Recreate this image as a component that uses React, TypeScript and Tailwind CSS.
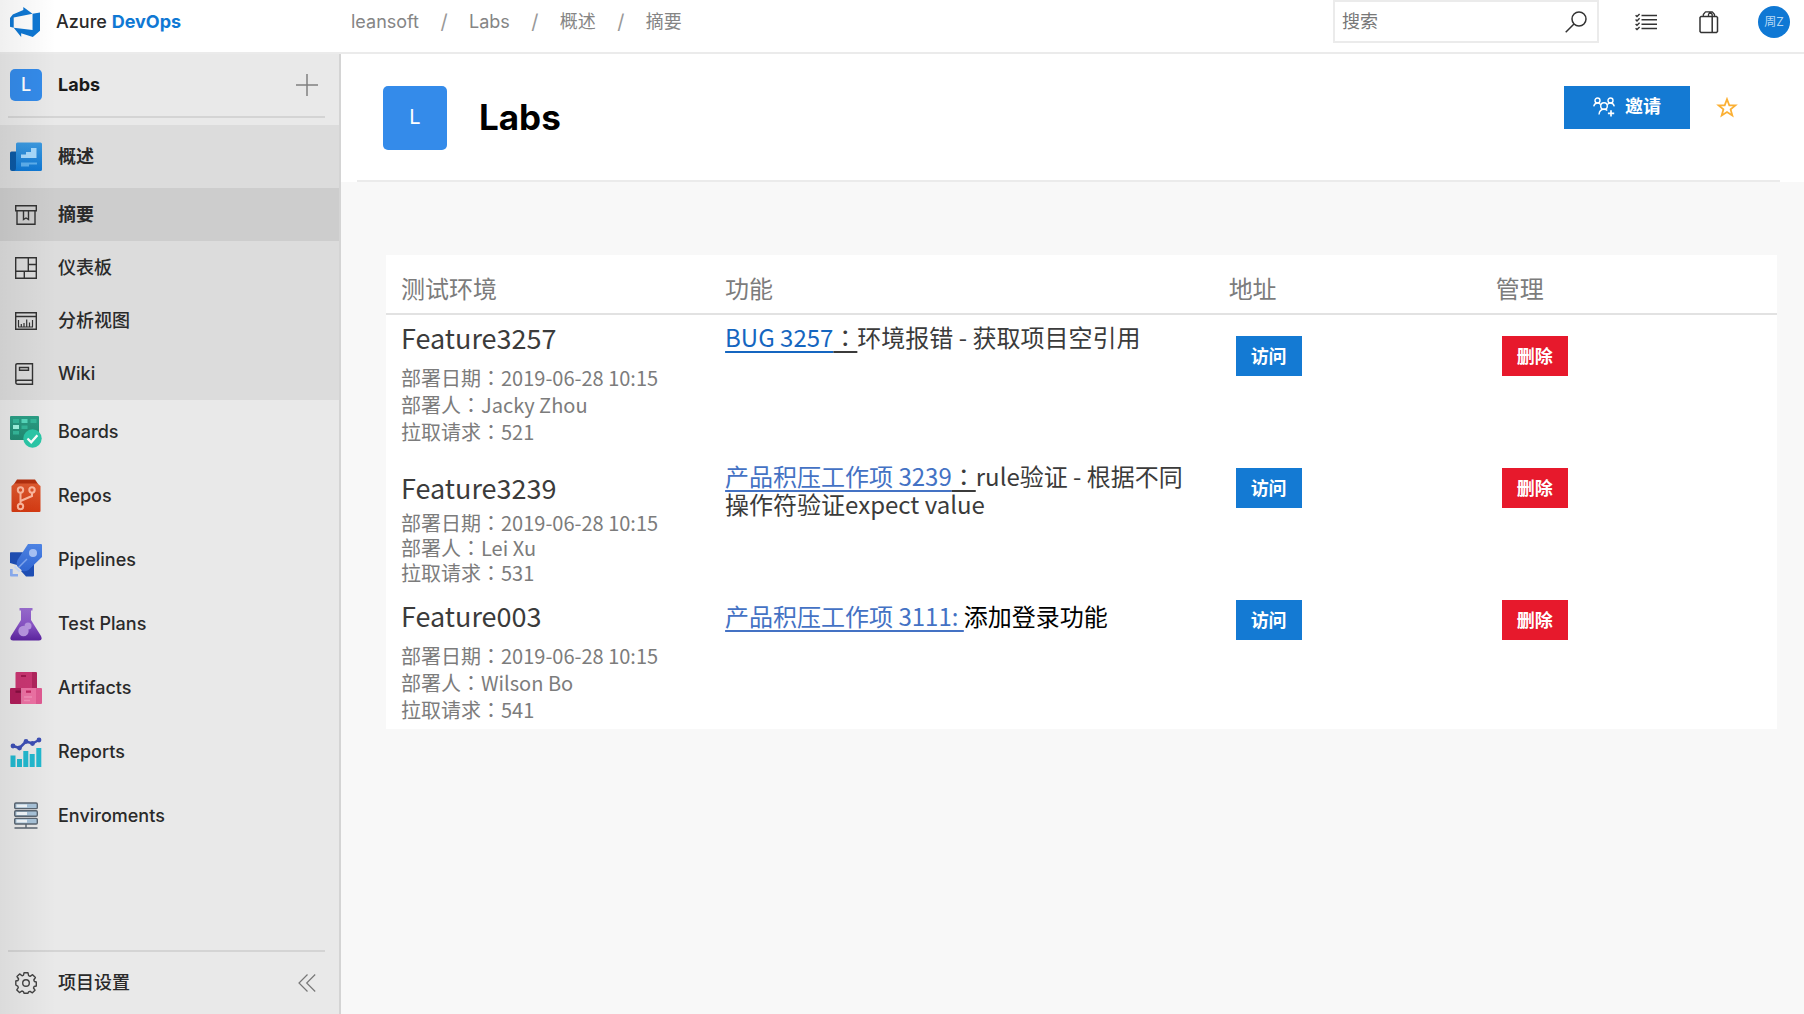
import React from "react";

const uiFont = "font-['Inter','Noto_Sans_CJK_SC',sans-serif]";
const tableFont = "font-['Noto_Sans_CJK_SC',sans-serif]";

/* ---------- icons ---------- */

const DevOpsLogo = () => (
  <svg viewBox="0 0 24 24" className="size-[30px] shrink-0" fill="#0f78d4" aria-hidden="true">
    <path d="M0 8.877L2.247 5.91l8.405-3.416V.022l7.37 5.393L2.966 8.338v8.225L0 15.707zm24-4.45v14.651l-5.753 4.9-9.303-3.057v3.056l-5.978-7.416 15.057 1.798V5.415z" />
  </svg>
);

const SearchIcon = () => (
  <svg viewBox="0 0 22 22" className="size-[22px]" fill="none" stroke="#333" strokeWidth="1.5" aria-hidden="true">
    <circle cx="14" cy="8" r="7" />
    <path d="M9 13L.7 21.3" />
  </svg>
);

const TaskListIcon = () => (
  <svg viewBox="0 0 22 18" className="h-[18px] w-[22px]" fill="none" stroke="#333" aria-hidden="true">
    <path d="M6.5 2.5H22M6.5 6.8H22M6.5 11.2H22M6.5 15.5H22" strokeWidth="1.6" />
    <path d="M.6 2.2l1.4 1.4L4.6 1M.6 6.5L2 7.9l2.6-2.6M.6 10.9L2 12.3l2.6-2.6M.6 15.2L2 16.6 4.6 14" strokeWidth="1.4" />
  </svg>
);

const BagIcon = () => (
  <svg viewBox="0 0 20 24" className="h-6 w-5" fill="none" stroke="#333" strokeWidth="1.5" strokeLinejoin="round" aria-hidden="true">
    <path d="M1 7.5L2 6.5h15.500l1 1v14l-1 1H2l-1-1zM13.200 6.500v16" />
    <path d="M4.300 6.500V4.500l2.200-2.700h6.800l2.200 2.700v2M9.500 6.500V4.300l1.700-2.300M11.200 2l2 2.500v2" strokeWidth="1.3" />
  </svg>
);

const PlusIcon = () => (
  <svg viewBox="0 0 22 22" className="size-[22px]" stroke="#808080" strokeWidth="1.5" aria-hidden="true">
    <path d="M11 0v22M0 11h22" />
  </svg>
);

const CollapseIcon = () => (
  <svg viewBox="0 0 18 18" className="size-[18px]" fill="none" stroke="#777" strokeWidth="1.2" aria-hidden="true">
    <path d="M9.5.5L1 9l8.5 8.5M17.2.5L8.7 9l8.5 8.5" />
  </svg>
);

const StarIcon = () => (
  <svg viewBox="0 0 22 21" className="h-[21px] w-[22px]" fill="none" stroke="#fbb034" strokeWidth="1.8" aria-hidden="true">
    <path d="M11 2.2l2.3 6.1 6.1.1-4.8 4 1.7 6.1L11 15l-5.3 3.5 1.7-6.1-4.8-4 6.1-.1z" />
  </svg>
);

const InviteIcon = () => (
  <svg viewBox="0 0 22 20" className="h-5 w-[22px]" fill="none" stroke="#fff" strokeWidth="1.4" aria-hidden="true">
    <circle cx="4.5" cy="3.5" r="2.5" />
    <circle cx="17.5" cy="3.5" r="2.5" />
    <circle cx="11" cy="9" r="3.3" />
    <path d="M.7 9.3C1.2 7.2 2.7 6 4.5 6c1.5 0 2.5.7 3.2 1.7M21.3 9.3C20.8 7.2 19.3 6 17.5 6c-1.5 0-2.5.7-3.2 1.7M6 17.5c.3-3 2.3-5.2 5-5.2 1.4 0 2.5.4 3.3 1.2" />
    <path d="M18 13.2v6.3M14.9 16.3h6.3" strokeWidth="1.7" />
  </svg>
);

const OverviewIcon = () => (
  <svg viewBox="0 0 32 30" className="h-[30px] w-8 shrink-0" aria-hidden="true">
    <defs>
      <linearGradient id="ov" x1="0" y1="0" x2="0" y2="1">
        <stop offset="0" stopColor="#3d9ae0" />
        <stop offset="1" stopColor="#0f78d4" />
      </linearGradient>
    </defs>
    <path d="M0 11q0-1.5 1.5-1.5H8V29H2q-2 0-2-2z" fill="#0c59a4" />
    <path d="M6 2q0-1.5 1.5-1.5h23q1.5 0 1.5 1.5v25.5q0 1.5-1.5 1.5H3.500Q6 29 6 26z" fill="url(#ov)" />
    <path d="M11 16v-3.500h5V10h5V6h5.500v10z" fill="#a9dafc" />
    <path d="M11 20.500h16v2H19v2h-8z" fill="#5eb0ee" />
  </svg>
);

const SummaryIcon = () => (
  <svg viewBox="0 0 22 20" className="h-5 w-[22px]" fill="none" stroke="#333" strokeWidth="1.4" aria-hidden="true">
    <path d="M.7.7h20.600v5H.7zM2 5.700v13.600h18V5.700M8.500 6v8.500L11 13l2.500 1.500V6" />
  </svg>
);

const DashboardIcon = () => (
  <svg viewBox="0 0 22 22" className="size-[22px]" fill="none" stroke="#333" strokeWidth="1.4" aria-hidden="true">
    <path d="M.7.7h20.600v20.600H.7zM.7 14.300h20.600M13.300.7v13.600M13.300 7.500h8M9.300 14.300v7" />
  </svg>
);

const AnalyticsIcon = () => (
  <svg viewBox="0 0 22 18" className="h-[18px] w-[22px]" fill="none" stroke="#333" strokeWidth="1.4" aria-hidden="true">
    <path d="M.7.7h20.600v16.600H.7zM.7 4.500h20.600" />
    <path d="M3.500 8v6.500M6.300 12v2.500M9 11v3.500M11.700 7.500v7M14.500 10.500v4M17.500 8v6.500M3 15h15" strokeWidth="1.2" />
  </svg>
);

const WikiIcon = () => (
  <svg viewBox="0 0 22 22" className="size-[22px]" fill="none" stroke="#333" strokeWidth="1.4" aria-hidden="true">
    <path d="M.8 19V2.200Q.8.700 2.300.700H17.500v20.600H2.800Q.8 21.300.8 19.300 .8 17.300 2.800 17.300H17.500M4.500 4.500h9v2.700h-9z" />
  </svg>
);

const BoardsIcon = () => (
  <svg viewBox="0 0 32 32" className="size-8 shrink-0" aria-hidden="true">
    <defs>
      <linearGradient id="bd" x1="0" y1="0" x2="0" y2="1">
        <stop offset="0" stopColor="#2c9f86" />
        <stop offset="1" stopColor="#218c73" />
      </linearGradient>
    </defs>
    <rect x="0" y="0" width="29" height="24" rx="1" fill="url(#bd)" />
    <path d="M3 3h6v4H3zM20.500 3h6v4h-6zM11.500 9.500h6v3.500h-6zM3 15h6v3.500H3z" fill="#35b99b" />
    <path d="M11.500 3h6v4h-6z" fill="#57d9bd" />
    <path d="M3 9h6v4H3z" fill="#a0f5e0" />
    <circle cx="22.5" cy="22.5" r="9.2" fill="#2bc8a8" />
    <path d="M17.500 22.500l3.700 3.700 6.200-7" fill="none" stroke="#fff" strokeWidth="2.3" />
  </svg>
);

const ReposIcon = () => (
  <svg viewBox="0 0 32 34" className="h-[34px] w-8 shrink-0" aria-hidden="true">
    <defs>
      <linearGradient id="rp" x1="0" y1="0" x2="0" y2="1">
        <stop offset="0" stopColor="#e05a30" />
        <stop offset="1" stopColor="#d63a12" />
      </linearGradient>
    </defs>
    <path d="M7 .5h18l4 6H3z" fill="#b5300f" />
    <path d="M1.500 7L5 4.500h22L30.500 7v25q0 1-1 1h-27q-1 0-1-1z" fill="url(#rp)" />
    <g fill="none" stroke="#ffb9a0" strokeWidth="2">
      <path d="M10.500 14v10.500M22 14v3l-11.500 5" />
      <circle cx="10.5" cy="11" r="2.7" />
      <circle cx="22" cy="11" r="2.7" />
      <circle cx="10.5" cy="27.5" r="2.7" />
    </g>
  </svg>
);

const PipelinesIcon = () => (
  <svg viewBox="0 0 32 33" className="h-[33px] w-8 shrink-0" aria-hidden="true">
    <defs>
      <linearGradient id="pl" x1="0" y1="0" x2="0" y2="1">
        <stop offset="0" stopColor="#4f86e8" />
        <stop offset="1" stopColor="#3269d8" />
      </linearGradient>
    </defs>
    <path d="M0 9q0-.8.800-.8H13L7 21 0 19zM24 18v13.500q0 1-1 1H16L11 27z" fill="#1f50b8" />
    <path d="M18 0h13q1 0 1 1v12L18.500 26q-3 2-6 1l-5.500-5q-1-3 .5-6z" fill="url(#pl)" />
    <circle cx="23" cy="9" r="4" fill="#a9c4f8" />
    <path d="M8.500 23.500L17 15" stroke="#82a9f3" strokeWidth="1.5" />
    <path d="M0 25h2.700v5H8v2.500H1q-1 0-1-1z" fill="#8db0f5" />
    <path d="M4.500 22.500L9.500 27.500" stroke="#cfdffb" strokeWidth="2" />
  </svg>
);

const TestPlansIcon = () => (
  <svg viewBox="0 0 32 33" className="h-[33px] w-8 shrink-0" aria-hidden="true">
    <defs>
      <linearGradient id="tp" x1="0" y1="0" x2="0" y2="1">
        <stop offset="0" stopColor="#9a6dd0" />
        <stop offset=".5" stopColor="#8a55c8" />
        <stop offset="1" stopColor="#5c24a0" />
      </linearGradient>
    </defs>
    <path d="M9.500 0h13v2.500H21v9.500L31 28q2 4.500-2 4.500H3q-4 0-2-4.500L11 12V2.500H9.500z" fill="url(#tp)" />
    <circle cx="18" cy="18" r="3.5" fill="#b996e2" />
    <circle cx="13.5" cy="23" r="5.2" fill="#b996e2" />
  </svg>
);

const ArtifactsIcon = () => (
  <svg viewBox="0 0 32 32" className="size-8 shrink-0" aria-hidden="true">
    <path d="M5.500 1q0-1 1-1H22v16H5.500z" fill="#ca3672" />
    <path d="M22 0h4q1 0 1 1v15h-5z" fill="#b0265d" />
    <path d="M11 3h5v2h-5z" fill="#a0194f" />
    <path d="M0 17q0-1 1-1h10.500v16H1q-1 0-1-1z" fill="#b01d5a" />
    <path d="M11.500 16H26v16H11.500z" fill="#ed72a4" />
    <path d="M26 16h5q1 0 1 1v14q0 1-1 1h-5z" fill="#e05a92" />
    <path d="M5.500 18.500H11v2.300H5.500z" fill="#850f3f" />
    <path d="M16 18.500h5v2.300h-5z" fill="#c22865" />
    <path d="M14 25h8M14 28.500h6" stroke="#f48fb8" strokeWidth="1.5" />
  </svg>
);

const ReportsIcon = () => (
  <svg viewBox="0 0 32 30" className="h-[30px] w-8 shrink-0" aria-hidden="true">
    <path d="M.5 18.500h5V30h-5zM7 22h5v8H7zM13.300 14h5v16h-5zM19.700 17h5v13h-5zM26.300 11h5v19h-5z" fill="#22b9cf" />
    <path d="M3 9l6.500 2L16 4.500 22.500 6.500 29 3" fill="none" stroke="#3d4fb5" strokeWidth="2.5" />
    <g fill="#3d4fb5">
      <circle cx="3" cy="9" r="2.4" />
      <circle cx="9.5" cy="11" r="2.4" />
      <circle cx="16" cy="4.5" r="2.4" />
      <circle cx="22.5" cy="6.5" r="2.4" />
      <circle cx="29" cy="3" r="2.4" />
    </g>
  </svg>
);

const ServersIcon = () => (
  <svg viewBox="0 0 24 28" className="h-7 w-6" fill="#a9c4da" stroke="#5b6672" strokeWidth="1.4" aria-hidden="true">
    <rect x=".7" y="1" width="22.6" height="5.6" rx="1.2" />
    <rect x=".7" y="8.7" width="22.6" height="5.6" rx="1.2" />
    <rect x=".7" y="16.4" width="22.6" height="5.6" rx="1.2" />
    <path d="M2.500 3.800H13M2.500 11.500H13M2.500 19.200H13" stroke="#f2f7fb" strokeWidth="2.8" />
    <path d="M12 22v4M.5 26h23" />
  </svg>
);

const GearIcon = () => (
  <svg viewBox="0 0 22 22" className="size-[22px]" fill="none" stroke="#444" strokeWidth="1.4" strokeLinejoin="round" aria-hidden="true">
    <path d="M9 .800h4l.6 2.900 1.500.600 2.500-1.600 2.800 2.800-1.600 2.500.6 1.500 1.900.5v4l-2.200.5-.6 1.500 1.500 2.200-2.600 2.600-2.400-1.500-1.500.600-.5 1.400H9l-.6-1.700-1.500-.600-2.400 1.600-2.700-2.700 1.500-2.300-.6-1.500L.8 13V9l2.200-.500.600-1.500-1.600-2.500 2.600-2.600L7.100 3.800l1.400-.600z" />
    <circle cx="11" cy="11" r="3.3" />
  </svg>
);

/* ---------- sidebar ---------- */

const overviewItems = [
  { label: "摘要", icon: <SummaryIcon />, active: true },
  { label: "仪表板", icon: <DashboardIcon />, active: false },
  { label: "分析视图", icon: <AnalyticsIcon />, active: false },
  { label: "Wiki", icon: <WikiIcon />, active: false },
];

const hubs = [
  { label: "Boards", icon: <BoardsIcon /> },
  { label: "Repos", icon: <ReposIcon /> },
  { label: "Pipelines", icon: <PipelinesIcon /> },
  { label: "Test Plans", icon: <TestPlansIcon /> },
  { label: "Artifacts", icon: <ArtifactsIcon /> },
  { label: "Reports", icon: <ReportsIcon /> },
  { label: "Enviroments", icon: <ServersIcon /> },
];

const IconSlot = ({ children }: { children: React.ReactNode }) => (
  <span className="flex w-8 shrink-0 justify-center">{children}</span>
);

const Sidebar = () => (
  <aside className="flex w-[341px] shrink-0 flex-col border-r-2 border-[#d4d4d4] bg-[#e9e9e9] text-lg font-medium text-[#2a2a2a]">
    <div className="ml-2 mr-[14px] flex h-16 items-center border-b-2 border-[#d4d4d4] pl-[2px]">
      <span className="flex size-8 items-center justify-center rounded-[5px] bg-[#348bea] text-white">L</span>
      <span className="ml-4 font-bold text-[#1a1a1a]">Labs</span>
      <button type="button" aria-label="新建" className="ml-auto mr-[7px]">
        <PlusIcon />
      </button>
    </div>
    <nav className="flex flex-col">
      <div className="mt-[7px] bg-[#dcdcdc]">
        <a href="#overview" className="flex h-[63px] items-center gap-4 pl-[10px] font-bold">
          <OverviewIcon />
          概述
        </a>
        {overviewItems.map((item) => (
          <a
            key={item.label}
            href="#hub"
            className={
              item.active
                ? "flex h-[53px] items-center gap-4 bg-[#cdcdcd] pl-[10px] font-bold"
                : "flex h-[53px] items-center gap-4 pl-[10px]"
            }
          >
            <IconSlot>{item.icon}</IconSlot>
            {item.label}
          </a>
        ))}
      </div>
      {hubs.map((hub) => (
        <a key={hub.label} href="#hub" className="flex h-16 items-center gap-4 pl-[10px]">
          <IconSlot>{hub.icon}</IconSlot>
          {hub.label}
        </a>
      ))}
    </nav>
    <div className="ml-2 mr-[14px] mt-auto flex h-16 items-center border-t-2 border-[#d4d4d4] pl-[2px]">
      <a href="#settings" className="flex items-center gap-4">
        <IconSlot>
          <GearIcon />
        </IconSlot>
        项目设置
      </a>
      <button type="button" aria-label="折叠" className="ml-auto mr-[9px]">
        <CollapseIcon />
      </button>
    </div>
  </aside>
);

/* ---------- top bar ---------- */

const crumbs = ["leansoft", "Labs", "概述", "摘要"];

const TopBar = () => (
  <header className="flex h-[54px] shrink-0 items-start border-b-2 border-[#ebebeb] bg-white">
    <a href="#home" className="flex h-[43px] w-[351px] shrink-0 items-center gap-4 pl-[10px] text-lg font-medium text-[#2a2a2a]">
      <DevOpsLogo />
      <span>
        Azure <span className="font-bold text-[#0f78d4]">DevOps</span>
      </span>
    </a>
    <nav aria-label="breadcrumb" className="flex h-[43px] items-center text-lg text-[#858585]">
      {crumbs.map((c, i) => (
        <React.Fragment key={c}>
          {i > 0 && <span className="w-[50px] text-center text-xl text-[#999]">/</span>}
          <a href="#crumb">{c}</a>
        </React.Fragment>
      ))}
    </nav>
    <div className="ml-auto flex h-[43px] items-center pr-[14px]">
      <label className="flex h-[43px] w-[266px] items-center border-2 border-[#ebebeb] pl-[7px] pr-[10px]">
        <input
          type="text"
          aria-label="搜索"
          placeholder="搜索"
          className="min-w-0 flex-1 bg-transparent text-lg outline-none placeholder:text-[#777]"
        />
        <SearchIcon />
      </label>
      <button type="button" aria-label="工作项" className="ml-9">
        <TaskListIcon />
      </button>
      <button type="button" aria-label="市场" className="ml-[42px]">
        <BagIcon />
      </button>
      <button
        type="button"
        className="ml-[39px] flex size-8 items-center justify-center rounded-full bg-[#0f78d4] text-xs text-[#b5d8f5]"
      >
        周Z
      </button>
    </div>
  </header>
);

/* ---------- environments table ---------- */

const Colon = () => <span className="font-['Noto_Sans_CJK_TC',sans-serif]">：</span>;

const rows = [
  {
    name: "Feature3257",
    date: "2019-06-28 10:15",
    by: "Jacky Zhou",
    pr: "521",
    link: "BUG 3257",
    linkClass: "text-[#1566c0]",
    colon: true,
    text: "环境报错 - 获取项目空引用",
    textClass: "text-[#3b3b3b]",
    height: "h-[133px]",
    envPad: "pt-[7px]",
    metaClass: "mt-[10px] leading-[27px]",
    featPad: "pt-2",
    actionPad: "pt-[21px]",
  },
  {
    name: "Feature3239",
    date: "2019-06-28 10:15",
    by: "Lei Xu",
    pr: "531",
    link: "产品积压工作项 3239",
    linkClass: "text-[#4472c4]",
    colon: true,
    text: "rule验证 - 根据不同操作符验证expect value",
    textClass: "text-[#3b3b3b]",
    height: "h-[138px]",
    envPad: "pt-[25px]",
    metaClass: "mt-[6px] leading-[25px]",
    featPad: "pt-[15px]",
    actionPad: "pt-[21px]",
  },
  {
    name: "Feature003",
    date: "2019-06-28 10:15",
    by: "Wilson Bo",
    pr: "541",
    link: "产品积压工作项 3111: ",
    linkClass: "text-[#4472c4]",
    colon: false,
    text: "添加登录功能",
    textClass: "text-black",
    height: "h-[144px]",
    envPad: "pt-[15px]",
    metaClass: "mt-[10px] leading-[27px]",
    featPad: "pt-[17px]",
    actionPad: "pt-[15px]",
  },
];

const EnvironmentTable = () => (
  <table className={`w-full table-fixed border-collapse bg-white text-left ${tableFont}`}>
    <colgroup>
      <col className="w-[23.3%]" />
      <col className="w-[36.2%]" />
      <col className="w-[19.2%]" />
      <col />
    </colgroup>
    <thead>
      <tr className="h-[59px] border-b-2 border-[#e2e2e2] text-2xl text-[#7c7c7c]">
        {["测试环境", "功能", "地址", "管理"].map((h) => (
          <th key={h} scope="col" className="pl-[15px] pt-[7px] font-normal">
            {h}
          </th>
        ))}
      </tr>
    </thead>
    <tbody>
      {rows.map((r) => (
        <tr key={r.name} className={`align-top ${r.height}`}>
          <td className="p-0 pl-[15px]">
            <div className={r.envPad}>
              <div className="text-[27px] leading-8 text-[#3b3b3b]">{r.name}</div>
              <div className={`text-xl text-[#7c7c7c] ${r.metaClass}`}>
                <p>
                  部署日期
                  <Colon />
                  {r.date}
                </p>
                <p>
                  部署人
                  <Colon />
                  {r.by}
                </p>
                <p>
                  拉取请求
                  <Colon />
                  {r.pr}
                </p>
              </div>
            </div>
          </td>
          <td className="p-0 pl-[15px] pr-6">
            <p className={`text-2xl leading-7 ${r.featPad} ${r.textClass}`}>
              <a href="#item" className={`whitespace-pre underline decoration-2 underline-offset-4 ${r.linkClass}`}>
                {r.link}
              </a>
              {r.colon && (
                <span className="underline decoration-2 underline-offset-4">
                  <Colon />
                </span>
              )}
              {r.text}
            </p>
          </td>
          <td className={`pl-[22px] ${r.actionPad}`}>
            <button type="button" className="flex h-10 w-[66px] items-center justify-center bg-[#147ad3] pb-[2px] text-lg font-bold text-white">
              访问
            </button>
          </td>
          <td className={`pl-[21px] ${r.actionPad}`}>
            <button type="button" className="flex h-10 w-[66px] items-center justify-center bg-[#e7192c] pb-[2px] text-lg font-bold text-white">
              删除
            </button>
          </td>
        </tr>
      ))}
    </tbody>
  </table>
);

/* ---------- page ---------- */

export default function App() {
  return (
    <div className={`relative flex min-h-screen flex-col bg-[#f8f8f8] ${uiFont}`}>
      <TopBar />
      <div className="flex flex-1">
        <Sidebar />
        <main className="min-w-0 flex-1">
          <section className="bg-white pl-4 pr-6">
            <div className="flex h-[128px] items-start border-b-2 border-[#ebebeb] pl-[26px] pr-[42px] pt-8">
              <span className="flex size-16 items-center justify-center rounded-[5px] bg-[#348bea] pb-[2px] text-xl text-white">L</span>
              <h1 className="ml-8 text-[35px] leading-[62px] font-bold text-black">Labs</h1>
              <button type="button" className="ml-auto flex h-[43px] w-[126px] items-center justify-center gap-[10px] bg-[#147ad3] pb-[2px] text-lg font-bold text-white">
                <InviteIcon />
                邀请
              </button>
              <button type="button" aria-label="收藏" className="ml-[26px] flex h-[43px] items-center">
                <StarIcon />
              </button>
            </div>
          </section>
          <section className="pl-[45px] pr-[27px] pt-[73px]">
            <EnvironmentTable />
          </section>
        </main>
      </div>
      <div className="pointer-events-none absolute inset-y-0 left-0 w-14 bg-linear-to-r from-black/6 to-transparent" />
    </div>
  );
}
